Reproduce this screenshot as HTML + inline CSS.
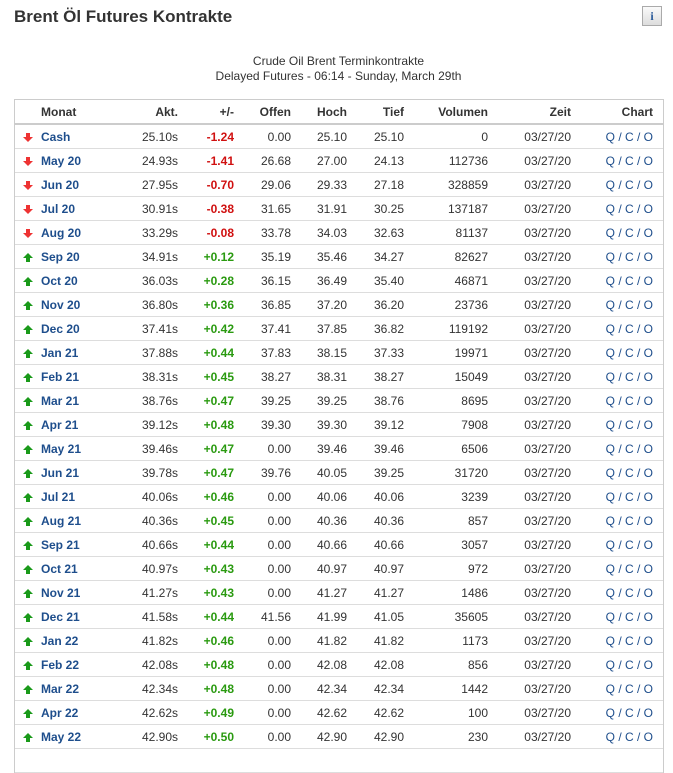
<!DOCTYPE html><html><head><meta charset="utf-8"><style>
body{margin:0;width:673px;height:753px;overflow:hidden;background:#fff;font-family:"Liberation Sans",Arial,sans-serif;font-size:12px;color:#333}
h1{position:absolute;left:14px;top:7px;margin:0;font-size:17px;font-weight:bold;color:#333}
.info{position:absolute;left:642px;top:6px;width:20px;height:20px;border:1px solid #aaa;background:linear-gradient(#fafafa,#ddd);box-sizing:border-box;text-align:center;font:bold 12px "Liberation Serif",serif;color:#2a5a9a;line-height:18px}
.sub{position:absolute;left:0;width:677px;text-align:center;font-size:12px;color:#333}
.tbl{position:absolute;left:14px;top:99px;width:648px;border-left:1px solid #ccc;border-right:1px solid #ccc;border-top:1px solid #ccc}
.r{position:relative;height:23px;border-bottom:1px solid #ddd}
.h{height:23px;border-bottom:2px solid #ccc;font-weight:bold}
.c{position:absolute;top:1px;line-height:23px;text-align:right;white-space:nowrap}
.m{left:26px;text-align:left;color:#1e4e8c;font-weight:bold}
.h .m{color:#333}
.a{right:485px}.p{right:429px;font-weight:bold}.o{right:372px}.hi{right:316px}.t{right:259px}.v{right:175px}.z{right:92px}.ch{right:10px;color:#1e4e8c}
.h .ch{color:#333}
.dn{color:#d01010}.up{color:#2a9a10}
.ar{position:absolute;left:8px;top:8px;width:0;height:0}
.ard{border-left:5px solid transparent;border-right:5px solid transparent;border-top:5px solid #e33;top:12px}
.ard::before{content:"";position:absolute;left:-2px;top:-9px;width:4px;height:4px;background:#e33}
.aru{border-left:5px solid transparent;border-right:5px solid transparent;border-bottom:5px solid #1a9a1a;top:8px}
.aru::before{content:"";position:absolute;left:-2px;top:5px;width:4px;height:4px;background:#1a9a1a}
</style></head><body>
<h1>Brent Öl Futures Kontrakte</h1>
<div class="info">i</div>
<div class="sub" style="top:54px">Crude Oil Brent Terminkontrakte</div>
<div class="sub" style="top:69px">Delayed Futures - 06:14 - Sunday, March 29th</div>
<div class="tbl">
<div class="r h"><span class="c m">Monat</span><span class="c a">Akt.</span><span class="c p">+/-</span><span class="c o">Offen</span><span class="c hi">Hoch</span><span class="c t">Tief</span><span class="c v">Volumen</span><span class="c z">Zeit</span><span class="c ch">Chart</span></div>
<div id="rows"></div>
</div>
<script>
var d=[["Cash","25.10s","-1.24","0.00","25.10","25.10","0"],["May 20","24.93s","-1.41","26.68","27.00","24.13","112736"],["Jun 20","27.95s","-0.70","29.06","29.33","27.18","328859"],["Jul 20","30.91s","-0.38","31.65","31.91","30.25","137187"],["Aug 20","33.29s","-0.08","33.78","34.03","32.63","81137"],["Sep 20","34.91s","+0.12","35.19","35.46","34.27","82627"],["Oct 20","36.03s","+0.28","36.15","36.49","35.40","46871"],["Nov 20","36.80s","+0.36","36.85","37.20","36.20","23736"],["Dec 20","37.41s","+0.42","37.41","37.85","36.82","119192"],["Jan 21","37.88s","+0.44","37.83","38.15","37.33","19971"],["Feb 21","38.31s","+0.45","38.27","38.31","38.27","15049"],["Mar 21","38.76s","+0.47","39.25","39.25","38.76","8695"],["Apr 21","39.12s","+0.48","39.30","39.30","39.12","7908"],["May 21","39.46s","+0.47","0.00","39.46","39.46","6506"],["Jun 21","39.78s","+0.47","39.76","40.05","39.25","31720"],["Jul 21","40.06s","+0.46","0.00","40.06","40.06","3239"],["Aug 21","40.36s","+0.45","0.00","40.36","40.36","857"],["Sep 21","40.66s","+0.44","0.00","40.66","40.66","3057"],["Oct 21","40.97s","+0.43","0.00","40.97","40.97","972"],["Nov 21","41.27s","+0.43","0.00","41.27","41.27","1486"],["Dec 21","41.58s","+0.44","41.56","41.99","41.05","35605"],["Jan 22","41.82s","+0.46","0.00","41.82","41.82","1173"],["Feb 22","42.08s","+0.48","0.00","42.08","42.08","856"],["Mar 22","42.34s","+0.48","0.00","42.34","42.34","1442"],["Apr 22","42.62s","+0.49","0.00","42.62","42.62","100"],["May 22","42.90s","+0.50","0.00","42.90","42.90","230"],["Jun 22","","","","","",""]];
var h="";d.forEach(function(r){var dn=r[2][0]=="-";var last=r[1]=="";h+='<div class="r">'+(last?'':'<span class="ar '+(dn?'ard':'aru')+'"></span><span class="c m">'+r[0]+'</span><span class="c a">'+r[1]+'</span><span class="c p '+(dn?'dn':'up')+'">'+r[2]+'</span><span class="c o">'+r[3]+'</span><span class="c hi">'+r[4]+'</span><span class="c t">'+r[5]+'</span><span class="c v">'+r[6]+'</span><span class="c z">03/27/20</span><span class="c ch">Q / C / O</span>')+'</div>';});
document.getElementById("rows").innerHTML=h;
</script>
</body></html>
